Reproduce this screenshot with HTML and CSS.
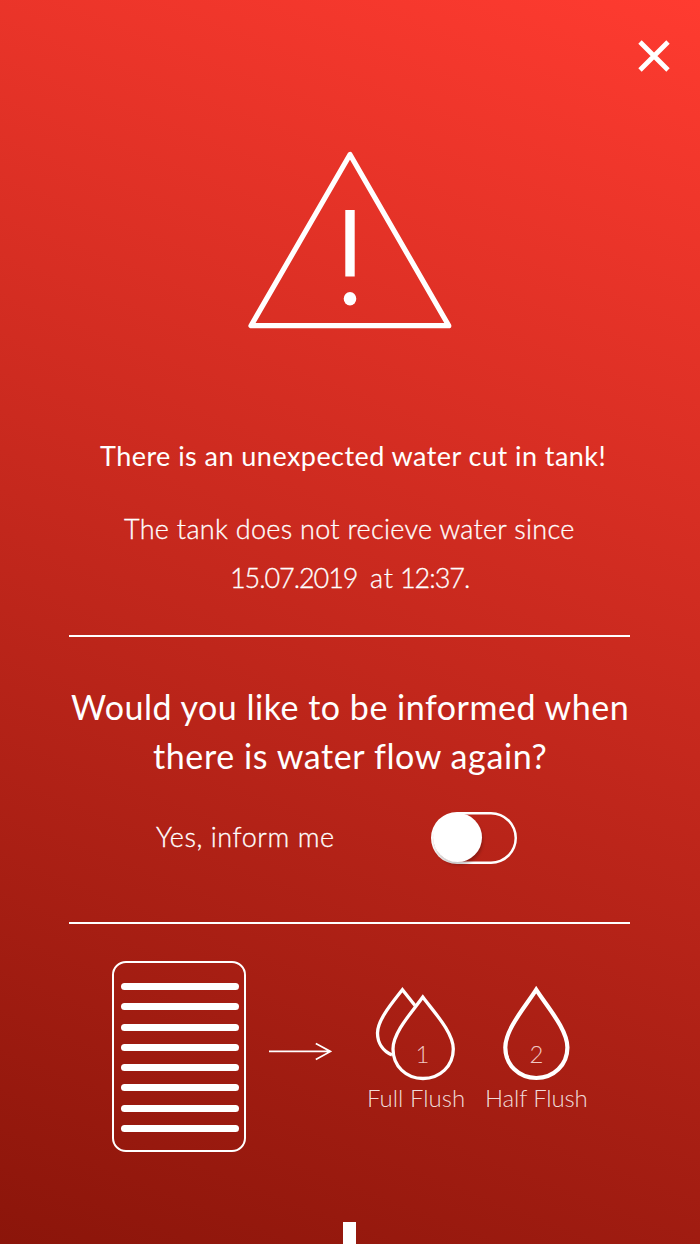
FILE: index.html
```html
<!DOCTYPE html>
<html lang="en">
<head>
<meta charset="utf-8">
<title>Water cut</title>
<link rel="stylesheet" href="styles.css">
</head>
<body>
<main class="screen">
  <header class="bar">
    <button class="close" aria-label="Close">
      <svg width="32" height="32" viewBox="0 0 32 32"><path d="M2 2L30 30M30 2L2 30" stroke="#fff" stroke-width="4.800"/></svg>
    </button>
  </header>
  <svg class="warning" width="204" height="180" viewBox="248 150 204 180">
    <path d="M350 154.500L251 325.700H448.800Z" fill="none" stroke="#fff" stroke-width="5.200" stroke-linejoin="round"/>
    <path d="M345.300 210h9.400v66.500h-9.400z" fill="#fff"/>
    <ellipse cx="350" cy="298.700" rx="6.300" ry="6.800" fill="#fff"/>
  </svg>
  <h1 class="title"><span class="t-title">There is an unexpected water cut in tank!</span></h1>
  <p class="detail"><span class="t-d1">The tank does not recieve water since</span><span class="t-d2">15.07.2019&nbsp; <span class="at">at</span> 12:37.</span></p>
  <hr class="rule">
  <h2 class="question"><span class="t-q1">Would you like to be informed when</span><span class="t-q2">there is water flow again?</span></h2>
  <div class="inform">
    <span class="inform-label">Yes, inform me</span>
    <span class="toggle" role="switch" aria-checked="false"><span class="knob"></span></span>
  </div>
  <hr class="rule">
  <section class="flush">
    <div class="panel"><i></i><i></i><i></i><i></i><i></i><i></i><i></i><i></i></div>
    <svg class="arrow" width="64" height="20" viewBox="268 1041 64 20"><path d="M269 1051.400H330M315.800 1043.500L330.500 1051.400L315.800 1059.500" fill="none" stroke="#fff" stroke-width="1.700"/></svg>
    <div class="option full">
      <svg width="100" height="96" viewBox="366 986 100 96" fill="none" stroke="#fff" stroke-width="3.300">
        <path d="M415 1005.500L402.400 989.700C392 1003 377.500 1020 377.500 1033C377.500 1043 383 1051 392 1055"/>
        <path d="M422.800 997C413 1011 393 1032 393 1049C393 1066 406 1078.500 423 1078.500S453.300 1066 453.300 1049C453.300 1032 433 1011 422.800 997Z"/>
        <text class="digit" x="415.500" y="1062.500">1</text>
      </svg>
      <span class="t-full">Full Flush</span>
    </div>
    <div class="option half">
      <svg width="104" height="96" viewBox="484 986 104 96" fill="none" stroke="#fff" stroke-width="4.200">
        <path d="M536.200 989.700C526 1006 505.300 1029 505.300 1047.500C505.300 1065 519 1078 536.300 1078S567.400 1065 567.400 1047.500C567.400 1029 546.500 1006 536.200 989.700Z"/>
        <text class="digit" x="529.500" y="1062.500">2</text>
      </svg>
      <span class="t-half">Half Flush</span>
    </div>
  </section>
  <div class="stub"></div>
</main>
</body>
</html>
```

FILE: styles.css
```css
* { box-sizing: border-box; }
body { margin: 0; }
.screen {
  width: 700px;
  height: 1244px;
  overflow: hidden;
  display: flex;
  flex-direction: column;
  color: #fff;
  font-family: Lato, "Noto Sans", sans-serif;
  font-kerning: normal;
  background: linear-gradient(21deg, #8b150a 0%, #ff3b30 100%);
}
.bar { height: 150px; padding: 40px 30px 0 0; display: flex; justify-content: flex-end; align-items: flex-start; flex: none; }
.close { padding: 0; border: 0; background: none; }
.close svg, .warning, .option svg { display: block; }
.warning { margin-left: 248px; flex: none; }
h1, h2, p { margin: 0; font-weight: 400; white-space: nowrap; }
.t-title, .t-d1, .t-d2, .t-q1, .t-q2 { display: block; }
.title { margin-top: 102px; padding-left: 100px; font-size: 27px; line-height: 48px; letter-spacing: .45px; }
.detail { margin-top: 25px; font-size: 27px; line-height: 48.5px; font-weight: 300; -webkit-text-stroke: .3px; }
.t-d1 { padding-left: 124px; letter-spacing: .3px; }
.t-d2 { padding-left: 230px; letter-spacing: -1.05px; }
.at { letter-spacing: .8px; }
.rule { width: 561px; height: 2px; margin: 33px 0 0 69px; border: 0; background: #fff; flex: none; }
.question { margin-top: 46px; font-size: 34px; line-height: 48.5px; }
.t-q1 { padding-left: 71px; letter-spacing: .51px; }
.t-q2 { padding-left: 153px; letter-spacing: .6px; }
.inform { height: 53px; margin: 31px 183px 0 156px; display: flex; align-items: center; justify-content: space-between; flex: none; }
.inform-label { margin-top: -1px; font-size: 27px; line-height: 48px; font-weight: 300; letter-spacing: .55px; white-space: nowrap; -webkit-text-stroke: .3px; }
.toggle { width: 86px; height: 52px; padding: 1.500px; border-radius: 26px; box-shadow: inset 0 0 0 2.500px #fff; flex: none; }
.knob { display: block; width: 49px; height: 49px; border-radius: 50%; background: #fff; box-shadow: 1px 3px 3px rgba(0, 0, 0, .22); }
.inform + .rule { margin-top: 58px; }
.flush { height: 191px; margin: 37px 0 0 112px; display: flex; flex: none; }
.panel { width: 134px; height: 191px; padding: 20px 5px 0 7px; border: 2px solid #fff; border-radius: 14px; display: flex; flex-direction: column; gap: 13.300px; }
.panel i { height: 7px; border-radius: 4px; background: #fff; flex: none; }
.arrow { margin: 80px 34px 0 22px; flex: none; }
.option { padding-top: 25px; font-size: 24px; line-height: 32px; font-weight: 300; color: rgba(255, 255, 255, .85); white-space: nowrap; }
.full { width: 100px; margin-right: 18px; }
.half { width: 104px; }
.t-full { margin-left: 1px; }
.t-half { margin-left: 1px; letter-spacing: -.15px; }
.digit { font-size: 24px; fill: #f0c8c3; stroke: none; }
.stub { width: 13px; height: 22px; margin: 70px 0 0 343px; background: #fff; flex: none; }
```
